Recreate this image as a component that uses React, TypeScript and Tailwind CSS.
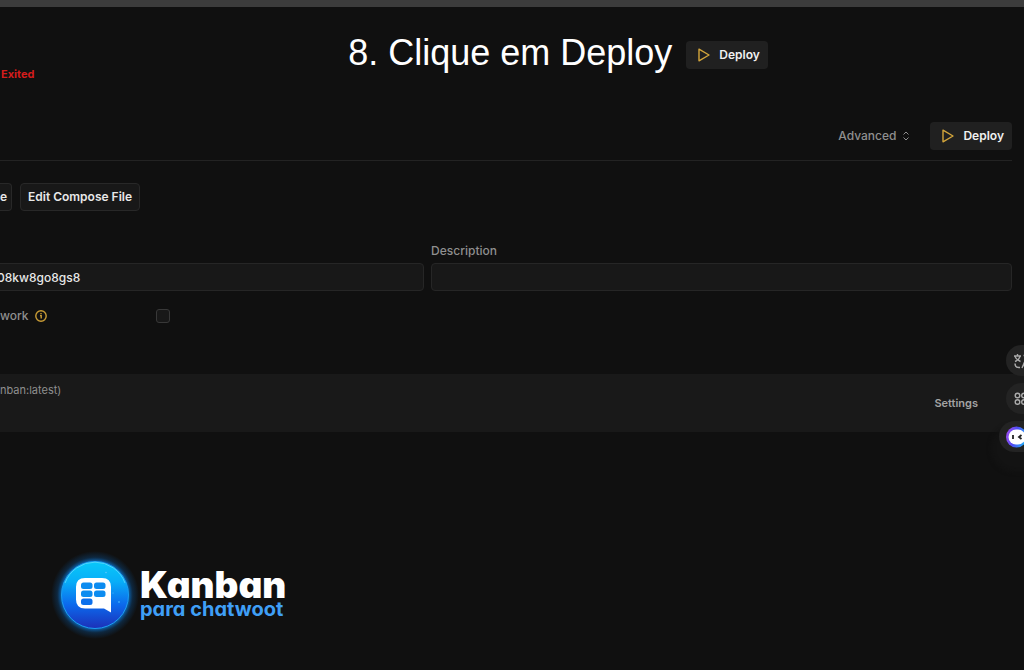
import { useState } from 'react';

function PlayIcon() {
  return (
    <svg viewBox="0 0 14 14" fill="none" stroke="#d3a53b" strokeWidth="1.4" strokeLinejoin="round" className="h-3.5 w-3.5">
      <path d="M2 1.2v11.6L12 7z" />
    </svg>
  );
}

function DeployButton() {
  return (
    <button type="button" className="flex h-7 shrink-0 items-center gap-2 rounded-sm bg-[#202020] pl-[11px] pr-2 font-semibold text-[#f0f0f0]">
      <PlayIcon />
      Deploy
    </button>
  );
}

function KanbanLogo() {
  return (
    <div className="flex items-center">
      <svg viewBox="0 0 88 88" className="h-[88px] w-[88px] shrink-0">
        <defs>
          <linearGradient id="disc" x1="0" y1="0" x2="0" y2="1">
            <stop offset="0" stopColor="#08c8f8" />
            <stop offset="0.3" stopColor="#08aef8" />
            <stop offset="0.65" stopColor="#0c68ec" />
            <stop offset="1" stopColor="#1c30b8" />
          </linearGradient>
          <radialGradient id="glow">
            <stop offset="0.76" stopColor="#0a7ddd" stopOpacity="0.8" />
            <stop offset="0.86" stopColor="#0a5ca8" stopOpacity="0.3" />
            <stop offset="1" stopColor="#0a5ca8" stopOpacity="0" />
          </radialGradient>
        </defs>
        <circle cx="44" cy="44" r="44" fill="url(#glow)" />
        <circle cx="44" cy="44" r="33.5" fill="url(#disc)" stroke="#1c9df0" strokeWidth="1" />
        <path d="M14 32a32 32 0 0 1 60 0" fill="none" stroke="#5fdcfc" strokeWidth="0.8" />
        <path d="M34 27h17q9 0 9 9v25.500l-7-4H34q-9 0-9-9V36q0-9 9-9z" fill="#fff" />
        <g fill="#0c8cf0">
          <rect x="30" y="31.500" width="11.500" height="6.500" rx="2.500" />
          <rect x="43" y="31.500" width="11.500" height="6.500" rx="2.500" />
          <rect x="30" y="39.500" width="11.500" height="6.500" rx="2.500" />
          <rect x="43" y="39.500" width="11.500" height="6.500" rx="2.500" />
          <rect x="30" y="47.500" width="11.500" height="6.500" rx="2.500" fill="#0c70ec" />
        </g>
        <g fill="#5cc8fc">
          <circle cx="55" cy="21.500" r="0.8" />
          <circle cx="68" cy="51" r="0.8" />
          <circle cx="62" cy="42" r="0.5" />
        </g>
      </svg>
      <div className="pb-1 pl-px [font-feature-settings:'cv11']">
        <p className="text-[37px] leading-8 font-black text-white">Kanban</p>
        <p className="text-[20px] leading-4 font-bold text-[#3f9ff6]">para chatwoot</p>
      </div>
    </div>
  );
}

function FloatingTools() {
  return (
    <div className="absolute top-[345px] right-0 flex flex-col items-end gap-[7px]">
      <button type="button" aria-label="Translate" className="z-10 flex h-[31px] w-[18px] items-center overflow-hidden rounded-l-full bg-[#232323] pl-2">
        <svg viewBox="0 0 18 18" fill="none" stroke="#aaa" strokeWidth="1.4" className="h-[18px] w-[18px] shrink-0">
          <path d="M0 4h7M3.500 2v2M1 9.500Q5 8 6 4.500M1 4.500Q2.500 8 6.500 9.500M9.500 3.500h3q3 0 3 3M1 11.500q0 4 4 4h1M8 16l3-7 3 7M9 13.500h4" />
        </svg>
      </button>
      <button type="button" aria-label="Apps" className="z-10 flex h-[31px] w-[18px] items-center overflow-hidden rounded-l-full bg-[#232323] pl-2">
        <svg viewBox="0 0 14 14" fill="none" stroke="#aaa" strokeWidth="1.4" className="h-3.5 w-3.5 shrink-0">
          <circle cx="3.500" cy="3.500" r="2.300" />
          <circle cx="10" cy="3.500" r="2.300" />
          <circle cx="3.500" cy="10" r="2.300" />
          <circle cx="10" cy="10" r="2.300" />
        </svg>
      </button>
      <button type="button" aria-label="Assistant" className="flex h-[31px] w-[25px] items-center overflow-hidden rounded-l-full bg-[#232323] pl-[7px] shadow-[0_12px_4px_8px_#131313]">
        <svg viewBox="0 0 22 22" className="h-[22px] w-[22px] shrink-0">
          <defs>
            <linearGradient id="bot" x1="0" y1="0.3" x2="1" y2="0.6">
              <stop offset="0" stopColor="#a04cf0" />
              <stop offset="0.45" stopColor="#4c4cf4" />
              <stop offset="1" stopColor="#20b8f8" />
            </linearGradient>
          </defs>
          <circle cx="10.500" cy="11" r="10.500" fill="url(#bot)" />
          <rect x="2.500" y="3.500" width="17" height="15" rx="7.500" fill="#fff" />
          <path d="M7 9v4M15.500 9l-2.500 2 2.500 2" fill="none" stroke="#222" strokeWidth="1.800" />
        </svg>
      </button>
    </div>
  );
}

export default function App() {
  const [name, setName] = useState('08kw8go8gs8');
  const [description, setDescription] = useState('');

  return (
    <div className="relative flex min-h-screen flex-col overflow-hidden bg-[#101010] font-['Inter',sans-serif] text-xs text-[#a3a3a3]">
      <div className="h-[7px] bg-[#3c3c3c]" />

      {/* Step title */}
      <header className="grid grid-cols-[34%_1fr] pt-5">
        <p className="self-end pb-px pl-px text-[11px] leading-4 font-bold text-[#d41c1c]">Exited</p>
        <div className="flex h-14 items-center gap-3.5">
          <h1 className="pb-1 font-['Liberation_Sans',Arial,sans-serif] text-[36px] leading-12 text-white">8. Clique em Deploy</h1>
          <DeployButton />
        </div>
      </header>

      <main className="flex flex-1 flex-col">
        {/* Actions */}
        <div className="mt-[39px] mr-3 flex items-center justify-end gap-[18px] border-b border-[#232323] pb-[10px]">
          <button type="button" className="flex items-center gap-1 font-medium text-[#8f8f8f]">
            Advanced
            <svg viewBox="0 0 12 12" fill="none" stroke="currentColor" strokeWidth="1" className="h-3 w-3">
              <path d="M3.500 4.500L6 2l2.500 2.500M3.500 7.500L6 10l2.500-2.500" />
            </svg>
          </button>
          <DeployButton />
        </div>

        <div className="mt-[22px] flex gap-2 font-semibold text-[#e8e8e8]">
          <button type="button" className="h-7 w-3 rounded-r-sm border border-l-0 border-[#282828] bg-[#181818] pr-2 text-right">e</button>
          <button type="button" className="h-7 rounded-sm border border-[#282828] bg-[#181818] px-[7px]">Edit Compose File</button>
        </div>

        {/* Service fields */}
        <div className="mt-8 mr-3 flex items-end gap-[7px]">
          <input
            aria-label="Service name"
            value={name}
            onChange={(e) => setName(e.target.value)}
            className="-ml-1 h-7 w-[42.3%] shrink-0 rounded-sm border border-[#262626] bg-[#181818] font-medium text-[#e8e8e8] outline-none"
          />
          <div className="flex flex-1 flex-col">
            <label htmlFor="description" className="mb-1 leading-4 font-medium text-[#8f8f8f]">Description</label>
            <input
              id="description"
              value={description}
              onChange={(e) => setDescription(e.target.value)}
              className="h-7 w-full rounded-sm border border-[#262626] bg-[#181818] px-2 text-[#e8e8e8] outline-none"
            />
          </div>
        </div>

        <div className="mt-[15px] flex h-5 items-center">
          <label htmlFor="network" className="flex w-[156px] items-center gap-1.5 font-medium text-[#8f8f8f]">
            work
            <svg viewBox="0 0 12 12" fill="none" stroke="#c99c35" strokeWidth="1.4" className="h-3 w-3">
              <circle cx="6" cy="6" r="5.200" />
              <path d="M5 5.500h1.200v3M6 3v1" />
            </svg>
          </label>
          <input id="network" type="checkbox" className="h-3.5 w-3.5 appearance-none rounded-[3px] border border-[#383838] bg-[#181818] checked:bg-[#c99c35]" />
        </div>

        {/* Service row */}
        <section className="mt-12 flex h-[58px] items-center justify-between bg-[#191919] pr-[46px] text-[11px]">
          <p className="self-start pt-2 leading-4 text-[#8f8f8f]">nban:latest)</p>
          <a href="#settings" className="font-semibold text-[#a3a3a3]">Settings</a>
        </section>

        <footer className="mt-auto pb-[31px] pl-[51px]">
          <KanbanLogo />
        </footer>
      </main>

      <FloatingTools />
    </div>
  );
}
